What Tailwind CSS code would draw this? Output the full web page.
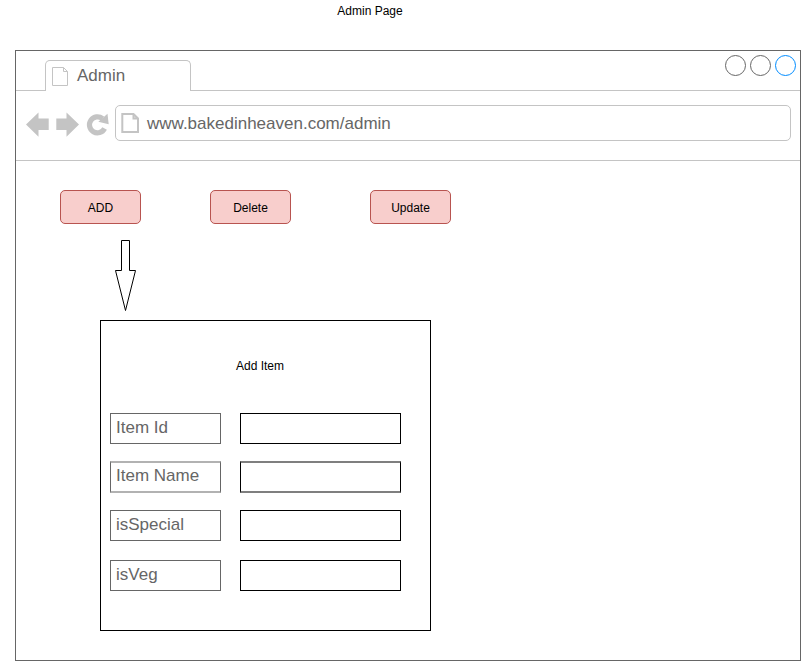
<!DOCTYPE html>
<html lang="en">
<head>
<meta charset="utf-8">
<title>Admin Page</title>
<script src="https://cdn.jsdelivr.net/npm/@tailwindcss/browser@4"></script>
</head>
<body class="flex h-[661px] w-[801px] flex-col overflow-hidden bg-white pl-[15px] font-['Liberation_Sans',Arial,sans-serif] text-xs text-black">
  <h1 class="h-[50px] w-[710px] shrink-0 pt-[3px] text-center leading-4">Admin Page</h1>
  <main class="flex h-[611px] w-[786px] flex-col border border-[#666666]">
    <header class="flex h-10 shrink-0 items-end">
      <div class="h-px w-[29px] bg-[#c4c4c4]"></div>
      <div class="flex h-[31px] w-[146px] rounded-t-[5px] border border-b-0 border-[#c4c4c4] pl-[6px] text-[17px] leading-[31px] text-[#666666]">
        <svg class="mt-1.5 h-[19px] w-[17px] shrink-0" viewBox="0 0 17 19" fill="none" stroke="#c4c4c4"><path d="M.5.5h11l4 4v14H.5zM11.500 .5v4h4"/></svg>
        <span class="ml-2 -mt-px">Admin</span>
      </div>
      <div class="flex h-10 flex-1 justify-end gap-1 border-b border-[#c4c4c4] pt-1 pr-[4px]">
        <i class="size-[21px] rounded-full border border-[#666666]"></i>
        <i class="size-[21px] rounded-full border border-[#666666]"></i>
        <i class="size-[21px] rounded-full border border-[#008cff]"></i>
      </div>
    </header>
    <nav class="flex h-[70px] shrink-0 border-b border-[#c4c4c4] pt-[14px]">
      <svg class="h-9 w-[99px] shrink-0" viewBox="16 105 99 36" fill="#c4c4c4">
        <path d="M26 124.500 38.500 112.500v6H48.700v11.500H38.500v6.700z"/>
        <path d="M79 124.500 66.500 112.500v6H56.300v11.500h10.200v6.700z"/>
        <path d="M104.600 128.500A8 8 0 1 1 102.500 118.600" fill="none" stroke="#c4c4c4" stroke-width="5.200"/>
        <path d="M107.500 113.800 108.700 124.300 98.300 121.800z"/>
      </svg>
      <div class="flex h-9 w-[676px] rounded-[5px] border border-[#c4c4c4] pl-[5px] text-[17px] leading-[34px] text-[#666666]">
        <svg class="mt-[7px] h-5 w-[18px] shrink-0" viewBox="0 0 18 20" fill="none" stroke="#c4c4c4" stroke-width="2"><path d="M1.300 1H12.500l4.500 4.500V19H1.300zM12.500 1v4.500H17"/></svg>
        <span class="mt-px ml-2">www.bakedinheaven.com/admin</span>
      </div>
    </nav>
    <div class="flex pt-[29px] pl-11">
      <button class="h-[34px] w-[81px] rounded-[5px] border border-[#b85450] bg-[#f8cecc] pt-0.5 leading-[30px]">ADD</button>
      <button class="ml-[69px] h-[34px] w-[81px] rounded-[5px] border border-[#b85450] bg-[#f8cecc] pt-0.5 leading-[30px]">Delete</button>
      <button class="ml-[79px] h-[34px] w-[81px] rounded-[5px] border border-[#b85450] bg-[#f8cecc] pt-0.5 leading-[30px]">Update</button>
    </div>
    <svg class="mt-4 ml-[98px] h-[72px] w-[23px] shrink-0" viewBox="0 0 23 72" fill="#fff" stroke="#000"><path d="M7.500.5h8v30h6l-10 40-10-40h6z"/></svg>
    <section class="mt-2 ml-[84px] flex h-[311px] w-[331px] shrink-0 flex-col border border-black pl-[9px]">
      <h2 class="h-[92px] w-[300px] shrink-0 pt-[37px] text-center leading-4">Add Item</h2>
      <div class="flex h-[31px] shrink-0 gap-[19px]">
        <label class="w-[111px] border border-[#666666] pl-[5px] text-[17px] leading-[27px] text-[#666666]">Item Id</label>
        <div class="w-[161px] border border-black"></div>
      </div>
      <div class="mt-[17px] flex h-8 shrink-0 gap-[19px]">
        <label class="w-[111px] border-x border-y-2 border-x-[#666666] border-y-[#b2b2b2] pl-[5px] text-[17px] leading-[25px] text-[#666666]">Item Name</label>
        <div class="w-[161px] border-x border-y-2 border-x-black border-y-[#7f7f7f]"></div>
      </div>
      <div class="mt-[17px] flex h-[31px] shrink-0 gap-[19px]">
        <label class="w-[111px] border border-[#666666] pl-[5px] text-[17px] leading-[27px] text-[#666666]">isSpecial</label>
        <div class="w-[161px] border border-black"></div>
      </div>
      <div class="mt-[19px] flex h-[31px] shrink-0 gap-[19px]">
        <label class="w-[111px] border border-[#666666] pl-[5px] text-[17px] leading-[27px] text-[#666666]">isVeg</label>
        <div class="w-[161px] border border-black"></div>
      </div>
    </section>
  </main>
</body>
</html>
